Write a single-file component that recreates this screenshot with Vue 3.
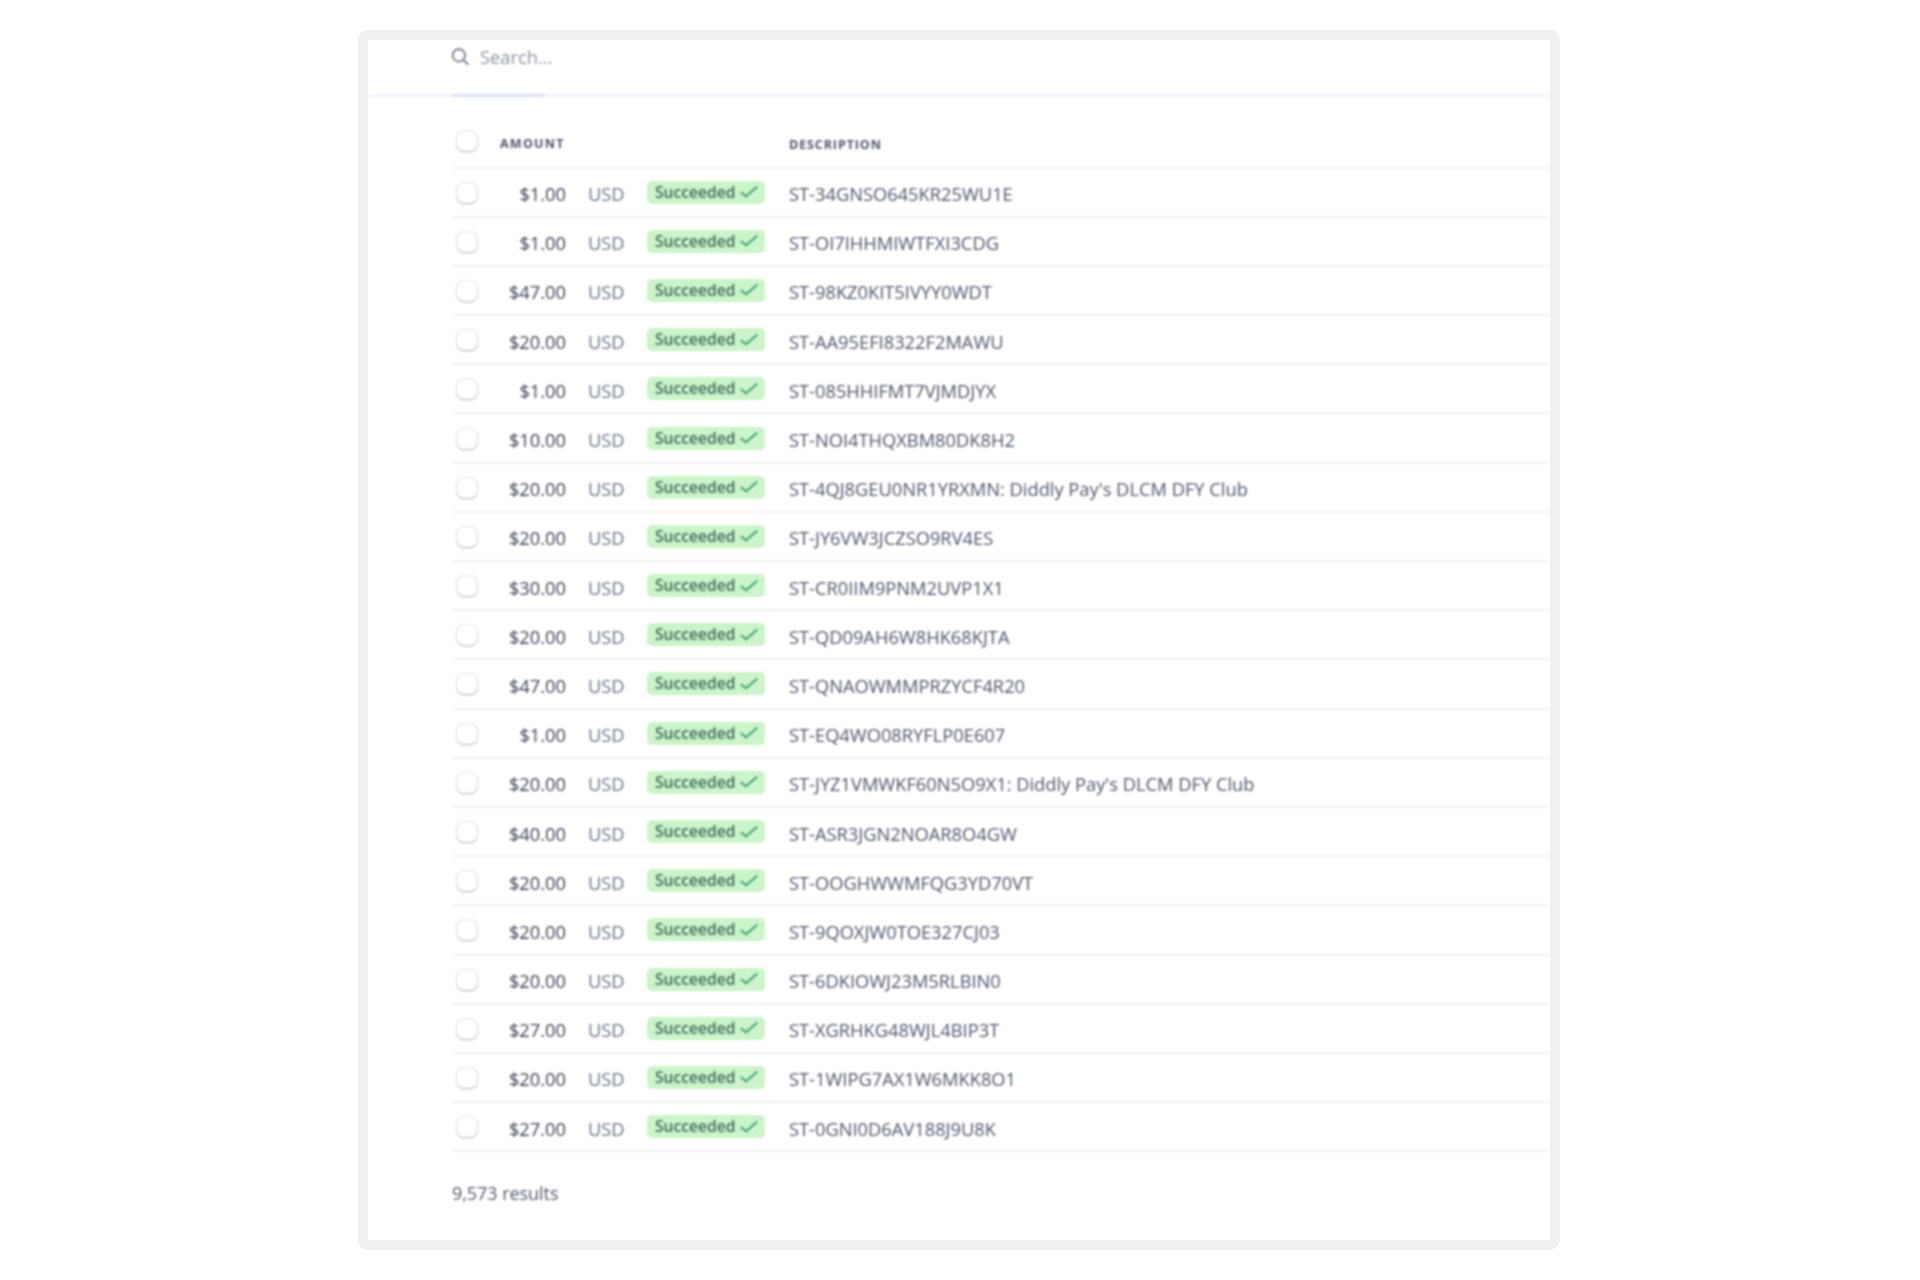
<script setup>
const rows = [
  ['$1.00', 'ST-34GNSO645KR25WU1E'],
  ['$1.00', 'ST-OI7IHHMIWTFXI3CDG'],
  ['$47.00', 'ST-98KZ0KIT5IVYY0WDT'],
  ['$20.00', 'ST-AA95EFI8322F2MAWU'],
  ['$1.00', 'ST-085HHIFMT7VJMDJYX'],
  ['$10.00', 'ST-NOI4THQXBM80DK8H2'],
  ['$20.00', "ST-4QJ8GEU0NR1YRXMN: Diddly Pay's DLCM DFY Club"],
  ['$20.00', 'ST-JY6VW3JCZSO9RV4ES'],
  ['$30.00', 'ST-CR0IIM9PNM2UVP1X1'],
  ['$20.00', 'ST-QD09AH6W8HK68KJTA'],
  ['$47.00', 'ST-QNAOWMMPRZYCF4R20'],
  ['$1.00', 'ST-EQ4WO08RYFLP0E607'],
  ['$20.00', "ST-JYZ1VMWKF60N5O9X1: Diddly Pay's DLCM DFY Club"],
  ['$40.00', 'ST-ASR3JGN2NOAR8O4GW'],
  ['$20.00', 'ST-OOGHWWMFQG3YD70VT'],
  ['$20.00', 'ST-9QOXJW0TOE327CJ03'],
  ['$20.00', 'ST-6DKIOWJ23M5RLBIN0'],
  ['$27.00', 'ST-XGRHKG48WJL4BIP3T'],
  ['$20.00', 'ST-1WIPG7AX1W6MKK8O1'],
  ['$27.00', 'ST-0GNI0D6AV188J9U8K'],
]
</script>

<template>
  <div class="page">
    <div class="frame">
      <div class="content">
        <div class="search">
          <svg class="search-icon" viewBox="0 0 16 16" fill="none" stroke="#6b7280" stroke-width="1.5">
            <circle cx="7" cy="7" r="5.5" />
            <path d="M11 11l4 4" stroke-linecap="round" />
          </svg>
          <span>Search...</span>
          <i class="search-accent"></i>
        </div>
        <div class="table">
          <div class="row head">
            <span class="check"></span>
            <span class="th">AMOUNT</span>
            <span></span>
            <span></span>
            <span class="th desc-th">DESCRIPTION</span>
          </div>
          <div v-for="(r, i) in rows" :key="i" class="row">
            <span class="check"></span>
            <span class="amount">{{ r[0] }}</span>
            <span class="currency">USD</span>
            <span class="badge">
              Succeeded
              <svg viewBox="0 0 16 12" fill="none" stroke="#2f9e6e" stroke-width="1.6" preserveAspectRatio="none">
                <path d="M1.5 6.5l4.2 4L14.5 1.5" />
              </svg>
            </span>
            <span class="desc">{{ r[1] }}</span>
          </div>
        </div>
        <div class="results">9,573 results</div>
      </div>
    </div>
  </div>
</template>

<style scoped>
.page {
  width: 1920px;
  height: 1280px;
  padding: 30px 360px 0 358px;
  box-sizing: border-box;
  background: #fff;
  font-family: "Open Sans", "Noto Sans", sans-serif;
}
.frame {
  height: 1220px;
  box-sizing: border-box;
  border: 10px solid #f0f0f0;
  border-radius: 10px;
  background: #fff;
  overflow: hidden;
}
.content {
  height: 100%;
  filter: blur(0.8px);
}
.search {
  position: relative;
  height: 57px;
  box-sizing: border-box;
  border-bottom: 3px solid #f3f4f8;
  padding: 7px 0 0 83px;
  display: flex;
  align-items: flex-start;
  gap: 11px;
  color: #8a92a3;
  font-size: 18.3px;
  line-height: 20px;
}
.search-icon {
  width: 18px;
  height: 19px;
  flex: none;
}
.search-accent {
  position: absolute;
  left: 84px;
  bottom: -3px;
  width: 92px;
  height: 3px;
  background: #dcdff3;
}
.table {
  margin-left: 84px;
  padding-top: 12px;
}
.row {
  display: grid;
  grid-template-columns: 48px 66px 81px 142px 1fr;
  align-items: center;
  height: 49.2px;
  box-sizing: border-box;
  border-bottom: 2px solid #eef1f6;
  font-size: 18.3px;
  line-height: 20px;
}
.head {
  height: 59.5px;
  padding-top: 9px;
}
.check {
  width: 20px;
  height: 20px;
  margin: 1px 0 0 5px;
  border-radius: 7px;
  background: #fff;
  box-shadow: 0 1px 2px rgba(60, 66, 87, 0.35), 0 0 0 1px rgba(60, 66, 87, 0.1);
}
.head .check {
  margin-top: -3px;
}
.th {
  font-size: 12.5px;
  font-weight: 700;
  letter-spacing: 1.25px;
  color: #4f566b;
  white-space: nowrap;
  margin-top: 3px;
}
.desc-th {
  margin-top: 5px;
  letter-spacing: 0.9px;
}
.amount {
  text-align: right;
  color: #3c4257;
  padding-top: 4px;
}
.currency {
  padding-left: 22px;
  color: #697386;
  padding-top: 4px;
}
.badge {
  width: 118px;
  height: 23px;
  box-sizing: border-box;
  padding-left: 8px;
  border-radius: 5px;
  background: #cbf4c9;
  color: #3f6a58;
  font-size: 15.6px;
  font-weight: 600;
  line-height: 21px;
  display: flex;
  align-items: center;
  gap: 4px;
  white-space: nowrap;
}
.badge svg {
  width: 20px;
  height: 13px;
  margin-top: -1px;
}
.desc {
  color: #4f566b;
  padding-top: 4px;
  white-space: nowrap;
}
.results {
  margin: 31px 0 0 84px;
  font-size: 17.9px;
  line-height: 20px;
  color: #4f566b;
}
</style>
